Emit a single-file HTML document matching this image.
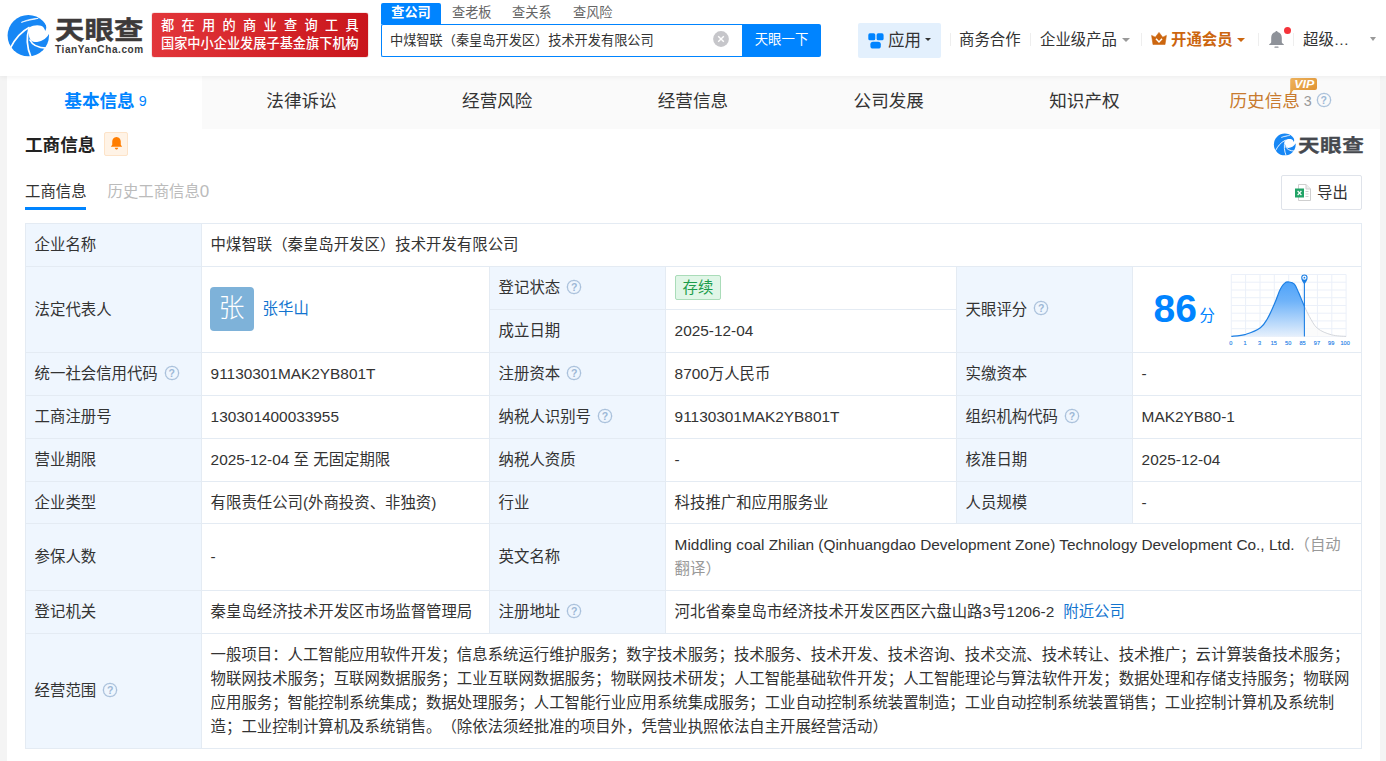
<!DOCTYPE html>
<html lang="zh-CN">
<head>
<meta charset="utf-8">
<title>天眼查</title>
<style>
*{box-sizing:border-box;margin:0;padding:0}
html,body{width:1386px;height:761px;overflow:hidden}
body{background:#f4f4f4;font-family:"Liberation Sans","Noto Sans CJK SC",sans-serif;color:#333;font-size:14px;position:relative;text-spacing-trim:space-all}
.abs{position:absolute;white-space:nowrap}
#header{position:absolute;left:0;top:0;width:1386px;height:76px;background:#fff;box-shadow:0 1px 5px rgba(0,0,0,.06);z-index:5}
#main{position:absolute;left:7px;top:76px;width:1373px;height:685px;background:#fff}
#tabbar{position:absolute;left:0;top:0;width:1373px;height:53px;background:#fafafa}
.tab{position:absolute;top:0;height:53px;width:195.7px;padding-left:2px;text-align:center;line-height:50px;font-size:17.6px;color:#333;white-space:nowrap}
.tab.act{background:#fff;color:#0084ff;font-weight:bold}
.tab small{font-size:14.3px;font-weight:normal;margin-left:4px;position:relative;top:-1.5px}
table{position:absolute;left:18px;top:147px;border-collapse:collapse;table-layout:fixed;width:1336px;font-size:15.4px;color:#333}
td{border:1px solid #e4ebf3;padding:0 9px 0 8.6px;vertical-align:middle;line-height:24px;white-space:nowrap;overflow:hidden}
td.l{background:#eff6fe}
.q{display:inline-block;width:14px;height:14px;border:1px solid #a3bcd8;box-shadow:0 0 0 0.3px #a3bcd8;border-radius:50%;color:#9db8d6;font-weight:bold;font-size:10.5px;line-height:12px;text-align:center;vertical-align:middle;margin-left:7px;position:relative;top:-2px;font-family:"Liberation Sans",sans-serif}
a{color:#1274cf;text-decoration:none}
</style>
</head>
<body>
<div id="header">
  <!-- logo -->
  <svg class="abs" style="left:4px;top:10px" width="50" height="50" viewBox="0 0 50 50">
    <circle cx="24.3" cy="25.6" r="20.7" fill="#1787f5"/>
    <path d="M41 13 C42.8 16 42.6 19 41.2 21 C40.6 18.6 39.4 16.6 37 15.8 C33 14.6 28.5 15.6 25.2 17.5 C24.2 21 24.4 25 25.6 28.2 C26.6 30.6 28.5 32 31 32.1 C36 32.2 42 29.5 44.9 24 L48 24 L48 12 Z" fill="#fff"/>
    <path d="M6.5 37.8 C10.5 30 15.5 22.5 25.5 17.3" fill="none" stroke="#fff" stroke-width="1.7"/>
    <path d="M26.8 46.5 C23.6 39 22 28 25 18.5" fill="none" stroke="#fff" stroke-width="1.7"/>
    <path d="M25.6 29.5 C28 34.5 34 38 42.5 38.2" fill="none" stroke="#fff" stroke-width="1.7"/>
    <path d="M17.3 12.4 C22 10 28 8.6 34.2 8.4 C28 9.6 22.5 10.8 17.3 12.4 Z" fill="#fff" stroke="#fff" stroke-width="0.7"/>
  </svg>
  <div class="abs" style="left:54.5px;top:11.5px;font-size:25.5px;line-height:36px;font-weight:700;color:#3d3a3a;-webkit-text-stroke:0.5px #3d3a3a;letter-spacing:0.2px;transform:scaleX(1.15);transform-origin:0 0">天眼查</div>
  <div class="abs" style="left:55px;top:43px;font-size:10px;line-height:13px;font-weight:bold;color:#3a3a3a;letter-spacing:0.6px">TianYanCha.com</div>
  <!-- red banner -->
  <div class="abs" style="left:152px;top:13px;width:216px;height:44px;border-radius:2px;background:linear-gradient(90deg,#e2363a,#c9151c);box-shadow:0 0 1px #a00"></div>
  <div class="abs" style="left:161px;top:16.5px;font-size:13.2px;line-height:18px;color:#fff;letter-spacing:7.3px;font-weight:500">都在用的商业查询工具</div>
  <div class="abs" style="left:161px;top:34.5px;font-size:13.2px;line-height:18px;color:#fff;font-weight:500">国家中小企业发展子基金旗下机构</div>
  <!-- search tabs -->
  <div class="abs" style="left:381px;top:3px;width:60px;height:21px;background:#0084ff;color:#fff;font-size:13.2px;line-height:20px;text-align:center;border-radius:2px 2px 0 0;font-weight:bold">查公司</div>
  <div class="abs" style="left:452px;top:3px;font-size:13.2px;line-height:20px;color:#666">查老板</div>
  <div class="abs" style="left:512px;top:3px;font-size:13.2px;line-height:20px;color:#666">查关系</div>
  <div class="abs" style="left:573px;top:3px;font-size:13.2px;line-height:20px;color:#666">查风险</div>
  <!-- search box -->
  <div class="abs" style="left:381px;top:24px;width:362px;height:33px;border:1px solid #0084ff;border-right:0;border-radius:2px 0 0 2px;background:#fff"></div>
  <div class="abs" style="left:390px;top:31px;font-size:13.2px;line-height:19px;color:#333">中煤智联（秦皇岛开发区）技术开发有限公司</div>
  <svg class="abs" style="left:712.8px;top:31.3px" width="16" height="16" viewBox="0 0 16 16"><circle cx="8" cy="8" r="7.9" fill="#c6c6ca"/><path d="M5.2 5.2 L10.8 10.8 M10.8 5.2 L5.2 10.8" stroke="#fff" stroke-width="1.4"/></svg>
  <div class="abs" style="left:742px;top:24px;width:79px;height:33px;background:#0084ff;color:#fff;font-size:13.4px;line-height:32px;text-align:center;border-radius:0 2px 2px 0">天眼一下</div>
  <!-- app button -->
  <div class="abs" style="left:858px;top:23px;width:83px;height:35px;background:#e3f0fd;border-radius:2px"></div>
  <svg class="abs" style="left:867.5px;top:32.5px" width="16" height="16" viewBox="0 0 16 16">
    <rect x="0.3" y="0.3" width="7" height="7" rx="1.6" fill="#0084ff"/>
    <rect x="8.6" y="0.3" width="7" height="7" rx="1.6" fill="#0084ff"/>
    <rect x="2.4" y="8.7" width="10.4" height="6.8" rx="2.6" fill="#0084ff"/>
  </svg>
  <div class="abs" style="left:888px;top:29px;font-size:16.5px;line-height:22px;color:#333">应用</div>
  <div class="abs" style="left:925px;top:38px;width:0;height:0;border:3px solid transparent;border-top:3.6px solid #333;border-bottom:0"></div>
  <div class="abs" style="left:950px;top:33px;width:1px;height:13px;background:#eeeeee"></div>
  <div class="abs" style="left:959px;top:29px;font-size:15.4px;line-height:22px;color:#333">商务合作</div>
  <div class="abs" style="left:1030px;top:33px;width:1px;height:13px;background:#eeeeee"></div>
  <div class="abs" style="left:1040px;top:29px;font-size:15.4px;line-height:22px;color:#333">企业级产品</div>
  <div class="abs" style="left:1122px;top:38px;width:0;height:0;border:4px solid transparent;border-top:4px solid #999;border-bottom:0"></div>
  <div class="abs" style="left:1141px;top:33px;width:1px;height:13px;background:#eeeeee"></div>
  <svg class="abs" style="left:1150.5px;top:32px" width="16" height="13" viewBox="0 0 16 13">
    <path d="M0.6 3.4 L4.3 5.2 L8 0.4 L11.7 5.2 L15.4 3.4 L14 12.6 H2 Z" fill="#cc660f" stroke="#cc660f" stroke-width="0.6" stroke-linejoin="round"/>
    <path d="M5 6.8 L8 10 L11 6.8" fill="none" stroke="#fff" stroke-width="1.5"/>
  </svg>
  <div class="abs" style="left:1171px;top:29px;font-size:15.4px;line-height:22px;color:#cc660f;font-weight:bold">开通会员</div>
  <div class="abs" style="left:1237px;top:38px;width:0;height:0;border:4px solid transparent;border-top:4px solid #cc660f;border-bottom:0"></div>
  <div class="abs" style="left:1258px;top:33px;width:1px;height:13px;background:#eeeeee"></div>
  <svg class="abs" style="left:1268px;top:30px" width="17" height="19" viewBox="0 0 17 19">
    <path d="M8.5 1 C7.8 1 7.4 1.5 7.4 2.1 C4.6 2.7 3.2 5 3.2 7.8 V12 C3.2 13 2.3 13.6 1.2 14.2 V15 H15.8 V14.2 C14.7 13.6 13.8 13 13.8 12 V7.8 C13.8 5 12.4 2.7 9.6 2.1 C9.6 1.5 9.2 1 8.5 1 Z" fill="#8e9299"/>
    <rect x="6.4" y="16.6" width="4.2" height="1.2" rx="0.6" fill="#8e9299"/>
  </svg>
  <div class="abs" style="left:1284px;top:27px;width:7px;height:7px;border-radius:50%;background:#f5333a"></div>
  <div class="abs" style="left:1293px;top:33px;width:1px;height:13px;background:#eeeeee"></div>
  <div class="abs" style="left:1303px;top:29px;font-size:15.4px;line-height:22px;color:#333">超级…</div>
  <div class="abs" style="left:1369.5px;top:37px;width:0;height:0;border:3.7px solid transparent;border-top:4px solid #999;border-bottom:0"></div>
</div>

<div id="main">
  <div id="tabbar">
    <div class="tab act" style="left:0;width:195px">基本信息<small>9</small></div>
    <div class="tab" style="left:195.7px">法律诉讼</div>
    <div class="tab" style="left:391.4px">经营风险</div>
    <div class="tab" style="left:587.1px">经营信息</div>
    <div class="tab" style="left:782.9px">公司发展</div>
    <div class="tab" style="left:978.6px">知识产权</div>
    <div class="tab" style="left:1174.3px;color:#c87a2e">历史信息<small style="color:#999">3</small><span class="q" style="margin-left:5px">?</span></div>
    <svg class="abs" style="left:1283px;top:1px" width="28" height="18" viewBox="0 0 28 18">
      <defs><linearGradient id="vg" x1="0" y1="0" x2="1" y2="1"><stop offset="0" stop-color="#efb45e"/><stop offset="1" stop-color="#de8e2c"/></linearGradient></defs>
      <path d="M2 1 H25 Q27 1 27 3 V11 Q27 13 25 13 H3.5 L0.2 17 V3 Q0.2 1 2 1 Z" fill="url(#vg)"/>
      <text x="14.2" y="11" text-anchor="middle" font-family="Liberation Sans, sans-serif" font-size="10" font-weight="bold" font-style="italic" fill="#fff" textLength="20" lengthAdjust="spacingAndGlyphs">VIP</text>
    </svg>
  </div>

  <!-- section title -->
  <div class="abs" style="left:18px;top:56px;font-size:17.6px;line-height:26px;font-weight:bold;color:#222">工商信息</div>
  <div class="abs" style="left:97px;top:56px;width:24px;height:24px;background:#fff3e6;border:1px solid #fde3c8;border-radius:2px"></div>
  <svg class="abs" style="left:101.5px;top:60px" width="15" height="15" viewBox="0 0 13 13">
    <path d="M6.5 0.8 C4 0.8 2.8 2.8 2.8 4.8 V7.6 L1.6 9.4 H11.4 L10.2 7.6 V4.8 C10.2 2.8 9 0.8 6.5 0.8 Z" fill="#ff7d00"/>
    <path d="M5 10.2 H8 C7.8 11.2 7.2 11.7 6.5 11.7 C5.8 11.7 5.2 11.2 5 10.2 Z" fill="#ff7d00"/>
  </svg>
  <!-- watermark logo -->
  <svg class="abs" style="left:1264.7px;top:54.7px" width="26.3" height="26.3" viewBox="0 0 50 50">
    <circle cx="24.3" cy="25.6" r="20.7" fill="#1787f5"/>
    <path d="M41 13 C42.8 16 42.6 19 41.2 21 C40.6 18.6 39.4 16.6 37 15.8 C33 14.6 28.5 15.6 25.2 17.5 C24.2 21 24.4 25 25.6 28.2 C26.6 30.6 28.5 32 31 32.1 C36 32.2 42 29.5 44.9 24 L48 24 L48 12 Z" fill="#fff"/>
    <path d="M6.5 37.8 C10.5 30 15.5 22.5 25.5 17.3" fill="none" stroke="#fff" stroke-width="1.7"/>
    <path d="M26.8 46.5 C23.6 39 22 28 25 18.5" fill="none" stroke="#fff" stroke-width="1.7"/>
    <path d="M25.6 29.5 C28 34.5 34 38 42.5 38.2" fill="none" stroke="#fff" stroke-width="1.7"/>
    <path d="M17.3 12.4 C22 10 28 8.6 34.2 8.4 C28 9.6 22.5 10.8 17.3 12.4 Z" fill="#fff" stroke="#fff" stroke-width="0.7"/>
  </svg>
  <div class="abs" style="left:1291px;top:55.5px;font-size:18px;line-height:28px;font-weight:700;color:#46494f;-webkit-text-stroke:0.3px #46494f;letter-spacing:0.4px;transform:scaleX(1.2);transform-origin:0 0">天眼查</div>

  <!-- sub tabs -->
  <div class="abs" style="left:18px;top:105px;font-size:15.4px;line-height:22px;color:#333">工商信息</div>
  <div class="abs" style="left:18px;top:131px;width:61px;height:3px;background:#0084ff"></div>
  <div class="abs" style="left:100.5px;top:105px;font-size:15.4px;line-height:22px;color:#bbb">历史工商信息<span style="font-size:17px;line-height:1">0</span></div>
  <!-- export -->
  <div class="abs" style="left:1274px;top:99px;width:81px;height:35px;border:1px solid #dfe3ea;border-radius:2px;background:#fff"></div>
  <svg class="abs" style="left:1288px;top:108px" width="16" height="17" viewBox="0 0 16 17">
    <path d="M3.5 0.5 H11 L15.5 5 V16.5 H3.5 Z" fill="#fff" stroke="#cfcfcf" stroke-width="1"/>
    <path d="M11 0.5 V5 H15.5" fill="#eee" stroke="#cfcfcf" stroke-width="1"/>
    <rect x="0" y="4.5" width="9" height="9" fill="#21a366"/>
    <path d="M2.6 6.8 L6.4 11.2 M6.4 6.8 L2.6 11.2" stroke="#fff" stroke-width="1.3"/>
    <path d="M10.5 7.5 H13.5 M10.5 10 H13.5 M10.5 12.5 H13.5" stroke="#cfcfcf" stroke-width="1"/>
  </svg>
  <div class="abs" style="left:1310px;top:106px;font-size:15.4px;line-height:22px;color:#333">导出</div>

  <div class="abs" style="left:1146.5px;top:210px;font-size:39px;line-height:46px;font-weight:bold;color:#0084ff">86</div>
  <div class="abs" style="left:1192.5px;top:229px;font-size:15.4px;line-height:22px;color:#0084ff">分</div>
  <svg class="abs" style="left:1218px;top:192px" width="135" height="82" viewBox="1225 268 135 82">
    <defs><linearGradient id="sg" x1="0" y1="0" x2="0" y2="1"><stop offset="0" stop-color="#4ea3fa"/><stop offset="0.35" stop-color="#6fb3f9"/><stop offset="1" stop-color="#e6f0fc"/></linearGradient></defs>
    <g stroke="#ebf0f9" stroke-width="1" fill="none"><path d="M1231.3 274.5 V336.4" /><path d="M1245.6 274.5 V336.4" /><path d="M1260.0 274.5 V336.4" /><path d="M1274.3 274.5 V336.4" /><path d="M1288.7 274.5 V336.4" /><path d="M1303.0 274.5 V336.4" /><path d="M1317.4 274.5 V336.4" /><path d="M1331.8 274.5 V336.4" /><path d="M1346.1 274.5 V336.4" /><path d="M1231.3 274.5 H1346.1" /><path d="M1231.3 282.2 H1346.1" /><path d="M1231.3 290.0 H1346.1" /><path d="M1231.3 297.7 H1346.1" /><path d="M1231.3 305.5 H1346.1" /><path d="M1231.3 313.2 H1346.1" /><path d="M1231.3 320.9 H1346.1" /><path d="M1231.3 328.7 H1346.1" /><path d="M1231.3 336.4 H1346.1" /></g>
    <path d="M1231.3 336.4 C1233.7 336.1 1241.0 335.7 1245.9 334.3 C1250.7 332.8 1256.8 330.4 1260.4 327.8 C1264.0 325.2 1265.1 322.6 1267.4 318.7 C1269.8 314.7 1272.3 309.0 1274.4 304.1 C1276.6 299.2 1278.6 292.5 1280.4 289.0 C1282.1 285.5 1283.2 284.3 1284.7 283.1 C1286.1 281.9 1287.4 281.8 1289.0 282.0 C1290.6 282.2 1292.7 282.4 1294.4 284.2 C1296.0 286.0 1297.0 289.1 1298.7 292.8 C1300.3 296.5 1302.6 302.3 1304.4 306.3 V336.4 H1231.3 Z" fill="url(#sg)"/>
    <path d="M1304.4 306.3 C1306.2 310.2 1307.3 312.8 1309.4 316.5 C1311.6 320.2 1313.8 325.3 1317.5 328.4 C1321.2 331.4 1326.8 333.5 1331.5 334.8 C1336.3 336.2 1343.7 336.2 1346.1 336.4 V336.4 H1304.4 Z" fill="#fafafa" opacity="0.8"/>
    <path d="M1231.3 336.4 C1233.7 336.1 1241.0 335.7 1245.9 334.3 C1250.7 332.8 1256.8 330.4 1260.4 327.8 C1264.0 325.2 1265.1 322.6 1267.4 318.7 C1269.8 314.7 1272.3 309.0 1274.4 304.1 C1276.6 299.2 1278.6 292.5 1280.4 289.0 C1282.1 285.5 1283.2 284.3 1284.7 283.1 C1286.1 281.9 1287.4 281.8 1289.0 282.0 C1290.6 282.2 1292.7 282.4 1294.4 284.2 C1296.0 286.0 1297.0 289.1 1298.7 292.8 C1300.3 296.5 1302.6 302.3 1304.4 306.3" fill="none" stroke="#1c7fe4" stroke-width="1.2"/>
    <path d="M1304.4 306.3 C1306.2 310.2 1307.3 312.8 1309.4 316.5 C1311.6 320.2 1313.8 325.3 1317.5 328.4 C1321.2 331.4 1326.8 333.5 1331.5 334.8 C1336.3 336.2 1343.7 336.2 1346.1 336.4" fill="none" stroke="#cfd3d8" stroke-width="0.9"/>
    <path d="M1304.4 282 V336.4" stroke="#1c7fe4" stroke-width="1.1"/>
    <path d="M1304.4 284.6 C1303.4 282.6 1301.2 280.4 1301.2 277.8 A3.2 3.2 0 1 1 1307.6 277.8 C1307.6 280.4 1305.4 282.6 1304.4 284.6 Z" fill="#1c7fe4"/>
    <circle cx="1304.4" cy="277.7" r="2.1" fill="#fff"/>
    <circle cx="1304.4" cy="277.7" r="0.9" fill="#1c7fe4"/>
    <g font-family="Liberation Sans, sans-serif" font-size="5.6" fill="#2b84e8" stroke="#2b84e8" stroke-width="0.15"><text x="1230.8" y="344.6" text-anchor="middle">0</text><text x="1245.1" y="344.6" text-anchor="middle">1</text><text x="1259.5" y="344.6" text-anchor="middle">3</text><text x="1273.8" y="344.6" text-anchor="middle">15</text><text x="1288.2" y="344.6" text-anchor="middle">50</text><text x="1302.5" y="344.6" text-anchor="middle">85</text><text x="1316.9" y="344.6" text-anchor="middle">97</text><text x="1331.2" y="344.6" text-anchor="middle">99</text><text x="1345.1" y="344.6" text-anchor="middle">100</text></g>
  </svg>
  <table>
    <colgroup><col style="width:176px"><col style="width:288px"><col style="width:176px"><col style="width:291px"><col style="width:176px"><col style="width:229px"></colgroup>
    <tr style="height:43px"><td class="l">企业名称</td><td colspan="5">中煤智联（秦皇岛开发区）技术开发有限公司</td></tr>
    <tr style="height:43px"><td class="l" rowspan="2">法定代表人</td>
      <td rowspan="2"><span style="display:inline-block;width:44px;height:44px;background:#7eb2d9;border-radius:4px;color:#fff;font-size:26px;line-height:43px;text-align:center;vertical-align:middle;margin-left:-1px;position:relative;top:-1px;font-weight:300">张</span><a style="margin-left:9px;vertical-align:middle;position:relative;top:-1px">张华山</a></td>
      <td class="l">登记状态<span class="q">?</span></td>
      <td><span style="display:inline-block;height:25px;line-height:23px;padding:0 7px;border:1px solid #aadcb9;background:#e0f6e7;color:#1c9c4b;border-radius:2px;font-size:15.4px;position:relative;top:-1px">存续</span></td>
      <td class="l" rowspan="2">天眼评分<span class="q">?</span></td>
      <td rowspan="2" style="position:relative;padding:0" id="score"></td></tr>
    <tr style="height:43px"><td class="l">成立日期</td><td>2025-12-04</td></tr>
    <tr style="height:43px"><td class="l">统一社会信用代码<span class="q">?</span></td><td>91130301MAK2YB801T</td><td class="l">注册资本<span class="q">?</span></td><td>8700万人民币</td><td class="l">实缴资本</td><td>-</td></tr>
    <tr style="height:43px"><td class="l">工商注册号</td><td>130301400033955</td><td class="l">纳税人识别号<span class="q">?</span></td><td>91130301MAK2YB801T</td><td class="l">组织机构代码<span class="q">?</span></td><td>MAK2YB80-1</td></tr>
    <tr style="height:43px"><td class="l">营业期限</td><td>2025-12-04 至 无固定期限</td><td class="l">纳税人资质</td><td>-</td><td class="l">核准日期</td><td>2025-12-04</td></tr>
    <tr style="height:42px"><td class="l">企业类型</td><td>有限责任公司(外商投资、非独资)</td><td class="l">行业</td><td>科技推广和应用服务业</td><td class="l">人员规模</td><td>-</td></tr>
    <tr style="height:67px"><td class="l">参保人数</td><td>-</td><td class="l">英文名称</td><td colspan="3" style="white-space:normal">Middling coal Zhilian (Qinhuangdao Development Zone) Technology Development Co., Ltd.<span style="color:#999">（自动翻译）</span></td></tr>
    <tr style="height:43px"><td class="l">登记机关</td><td>秦皇岛经济技术开发区市场监督管理局</td><td class="l">注册地址<span class="q">?</span></td><td colspan="3">河北省秦皇岛市经济技术开发区西区六盘山路3号1206-2<a style="margin-left:9px">附近公司</a></td></tr>
    <tr style="height:115px"><td class="l">经营范围<span class="q">?</span></td><td colspan="5" style="white-space:normal">一般项目：人工智能应用软件开发；信息系统运行维护服务；数字技术服务；技术服务、技术开发、技术咨询、技术交流、技术转让、技术推广；云计算装备技术服务；物联网技术服务；互联网数据服务；工业互联网数据服务；物联网技术研发；人工智能基础软件开发；人工智能理论与算法软件开发；数据处理和存储支持服务；物联网应用服务；智能控制系统集成；数据处理服务；人工智能行业应用系统集成服务；工业自动控制系统装置制造；工业自动控制系统装置销售；工业控制计算机及系统制造；工业控制计算机及系统销售。（除依法须经批准的项目外，凭营业执照依法自主开展经营活动）</td></tr>
  </table>
</div>
</body>
</html>
